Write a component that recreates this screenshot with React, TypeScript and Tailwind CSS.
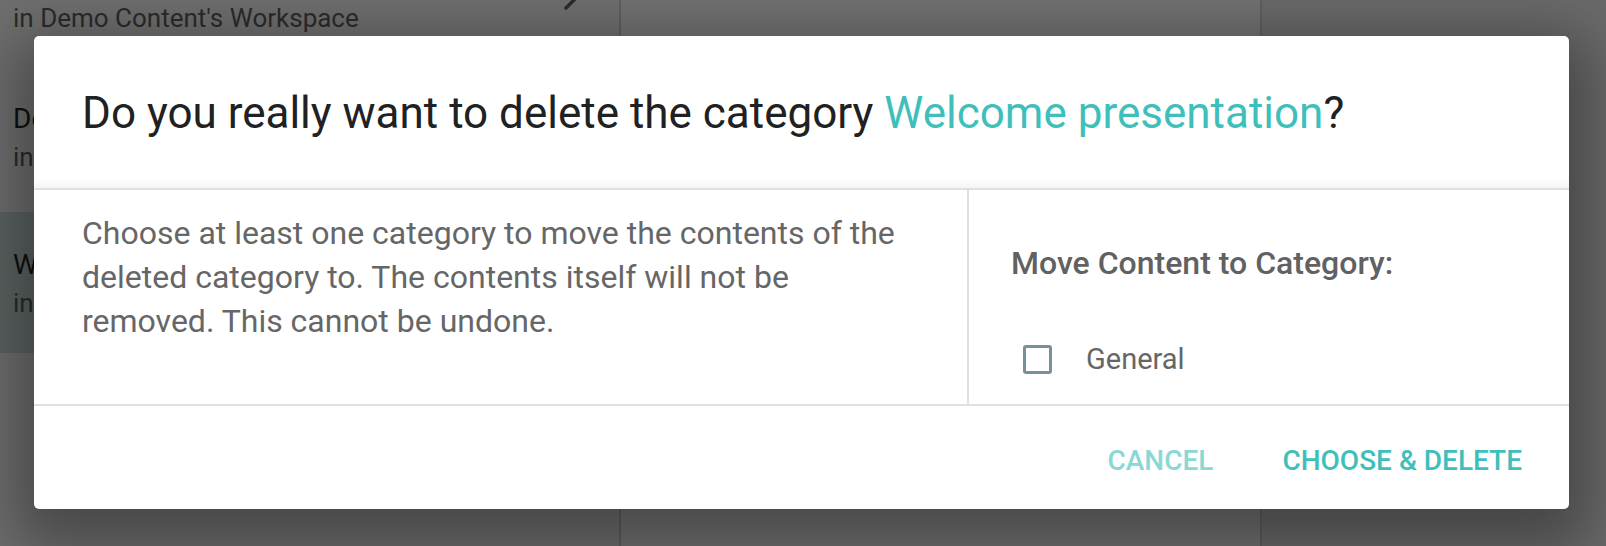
import { ChevronRight } from "lucide-react"

function BackgroundPage() {
  return (
    <div className="flex h-full w-full bg-[#6f6f6f]">
      {/* list column */}
      <div className="flex w-[621px] shrink-0 flex-col border-r-2 border-[#5f5f5f]">
        <div className="relative h-[62px] px-[13px]">
          <p className="pt-[2px] text-[26px] leading-[32px] text-[#2b2b2b]">
            in Demo Content's Workspace
          </p>
          <ChevronRight className="absolute right-[28px] top-[-22px] h-10 w-10 text-[#2b2b2b]" />
        </div>
        <div className="flex h-[150px] flex-col justify-center px-[13px]">
          <p className="text-[28px] leading-[40px] text-[#111]">Default</p>
          <p className="text-[26px] leading-[36px] text-[#2b2b2b]">in Demo Content's Workspace</p>
        </div>
        <div className="flex h-[141px] flex-col justify-center bg-[#5c6463] px-[13px]">
          <p className="text-[28px] leading-[40px] text-[#111]">Welcome presentation</p>
          <p className="text-[26px] leading-[36px] text-[#2b2b2b]">in Demo Content's Workspace</p>
        </div>
        <div className="flex-1" />
      </div>
      <div className="w-[641px] shrink-0 border-r-2 border-[#5f5f5f] bg-[#727272]" />
      <div className="flex-1 bg-[#6a6a6a]" />
    </div>
  )
}

export default function App() {
  return (
    <div
      className="relative h-[546px] w-full overflow-hidden"
      style={{ fontFamily: "Roboto, 'Liberation Sans', sans-serif" }}>
      <BackgroundPage />

      {/* dialog */}
      <div className="absolute left-[34px] top-[36px] flex h-[473px] w-[1535px] flex-col overflow-hidden rounded-[5px] bg-white shadow-[0_20px_60px_20px_rgba(0,0,0,0.35)]">
        <div className="flex h-[154px] shrink-0 items-center border-b-2 border-[#e0e0e0] px-[48px] pt-[2px] shadow-[inset_0_-14px_12px_-12px_rgba(0,0,0,0.07)]">
          <h1 className="text-[44px] font-normal leading-none text-[#212121]">
            Do you really want to delete the category{" "}
            <span className="text-[#3fbfbb]">Welcome presentation</span>?
          </h1>
        </div>

        <div className="flex h-[216px] shrink-0 border-b-2 border-[#e0e0e0]">
          <div className="w-[935px] shrink-0 border-r-2 border-[#e0e0e0] px-[48px] pt-[21px]">
            <p className="text-[32px] leading-[44px] text-[#666]">
              Choose at least one category to move the contents of the deleted category to. The
              contents itself will not be removed. This cannot be undone.
            </p>
          </div>
          <div className="flex flex-1 flex-col px-[42px] pt-[55px]">
            <p className="text-[32px] font-medium leading-[36px] text-[#616161]">
              Move Content to Category:
            </p>
            <label className="mt-[60px] flex items-center gap-[34px] pl-[12px]">
              <span className="h-[29px] w-[29px] rounded-[3px] border-[3px] border-[#78909c]" />
              <span className="text-[29px] leading-[36px] text-[#666]">General</span>
            </label>
          </div>
        </div>

        <div className="flex flex-1 items-center justify-end gap-[37px] px-[31px] pt-[6px]">
          <button className="px-4 py-2 text-[28px] font-medium leading-none text-[#8ad8d5]">
            CANCEL
          </button>
          <button className="px-4 py-2 text-[28px] font-medium leading-none text-[#3fbfbb]">
            CHOOSE &amp; DELETE
          </button>
        </div>
      </div>
    </div>
  )
}
